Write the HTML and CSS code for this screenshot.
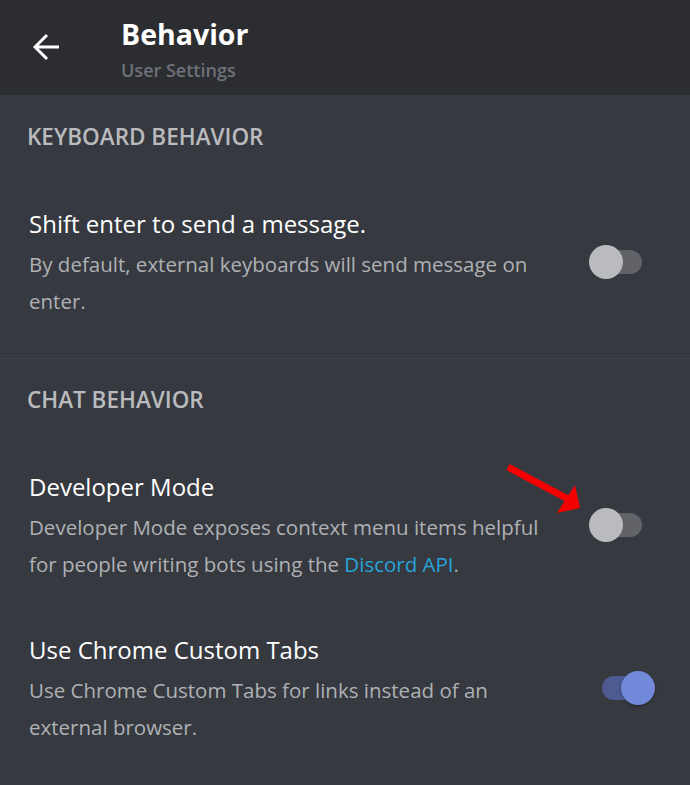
FILE: index.html
```html
<!DOCTYPE html>
<html>
<head>
<meta charset="utf-8">
<link rel="stylesheet" href="styles.css">
</head>
<body>
<div class="app">
  <header class="topbar">
    <div class="back">
      <svg width="28" height="28" viewBox="0 0 28 28"><path d="M26 14H3M14 2L2 14l12 12" fill="none" stroke="#fff" stroke-width="3"/></svg>
    </div>
    <div class="titles">
      <div class="title">Behavior</div>
      <div class="subtitle">User Settings</div>
    </div>
  </header>

  <section class="section first">
    <h2 class="heading">KEYBOARD BEHAVIOR</h2>
    <div class="item">
      <div class="text">
        <div class="item-title">Shift enter to send a message.</div>
        <div class="item-desc">By default, external keyboards will send message on enter.</div>
      </div>
      <div class="toggle off"><span class="track"></span><span class="knob"></span></div>
    </div>
  </section>

  <section class="section">
    <h2 class="heading">CHAT BEHAVIOR</h2>
    <div class="item">
      <div class="text">
        <div class="item-title">Developer Mode</div>
        <div class="item-desc">Developer Mode exposes context menu items helpful for people writing bots using the <span class="link">Discord API</span>.</div>
      </div>
      <div class="toggle off"><span class="track"></span><span class="knob"></span></div>
    </div>
    <div class="item next">
      <div class="text">
        <div class="item-title">Use Chrome Custom Tabs</div>
        <div class="item-desc">Use Chrome Custom Tabs for links instead of an external browser.</div>
      </div>
      <div class="toggle on"><span class="track"></span><span class="knob"></span></div>
    </div>
  </section>

  <svg class="arrow" width="90" height="70" viewBox="0 0 90 70">
    <line x1="8" y1="12" x2="68" y2="44" stroke="#f40000" stroke-width="7"/>
    <polygon points="57,58 80,53 75,30" fill="#f40000"/>
  </svg>
</div>
</body>
</html>
```
FILE: styles.css
```css
* { box-sizing: border-box; }
html, body { margin: 0; padding: 0; }
body {
  background: #36393f;
  font-family: "Open Sans", "Noto Sans", sans-serif;
  width: 690px;
  height: 785px;
  overflow: hidden;
}
.app { position: relative; width: 690px; height: 785px; }

.topbar {
  height: 95px;
  background: #2b2d31;
  display: flex;
  align-items: flex-start;
}
.back {
  margin: 33px 0 0 33px;
  width: 28px;
  height: 28px;
  display: flex;
}
.titles { margin-left: 60px; padding-top: 16px; }
.title {
  color: #fff;
  font-weight: 700;
  font-size: 28.5px;
  line-height: 36px;
}
.subtitle {
  color: #6e7178;
  font-weight: 600;
  font-size: 18px;
  line-height: 24px;
  margin-top: 6px;
}

.section { padding: 27px 0 38px 0; }
.section.first { padding-top: 28px; border-bottom: 1px solid #3f4248; }
.heading {
  margin: 0 0 0 27px;
  font-size: 22.5px;
  line-height: 28px;
  font-weight: 600;
  color: #b9bbbe;
}
.item {
  display: flex;
  align-items: center;
  padding: 0 41px 0 29px;
  margin-top: 58px;
}
.item.next { margin-top: 52px; }
.text { flex: 1; min-width: 0; }
.item-title {
  color: #fff;
  font-size: 24px;
  line-height: 30px;
}
.item-desc {
  color: #afb1b5;
  font-size: 20.5px;
  line-height: 37px;
  margin-top: 7px;
}
.link { color: #27a3db; }

.toggle {
  position: relative;
  width: 60px;
  height: 34px;
  margin-left: 34px;
  margin-bottom: 6px;
  flex: none;
}
.track {
  position: absolute;
  top: 5px;
  height: 24px;
  border-radius: 12px;
}
.knob {
  position: absolute;
  top: 0;
  width: 34px;
  height: 34px;
  border-radius: 50%;
}
.toggle.off .track { left: 5px; width: 48px; background: #616369; }
.toggle.off .knob { left: 0; background: #b9bbbe; }
.toggle.on .track { left: 13px; width: 42px; background: #4e5b93; }
.toggle.on .knob { right: -6px; background: #7289da; box-shadow: 0 1px 3px rgba(0,0,0,0.35); }

.arrow {
  position: absolute;
  left: 500px;
  top: 455px;
}
```
